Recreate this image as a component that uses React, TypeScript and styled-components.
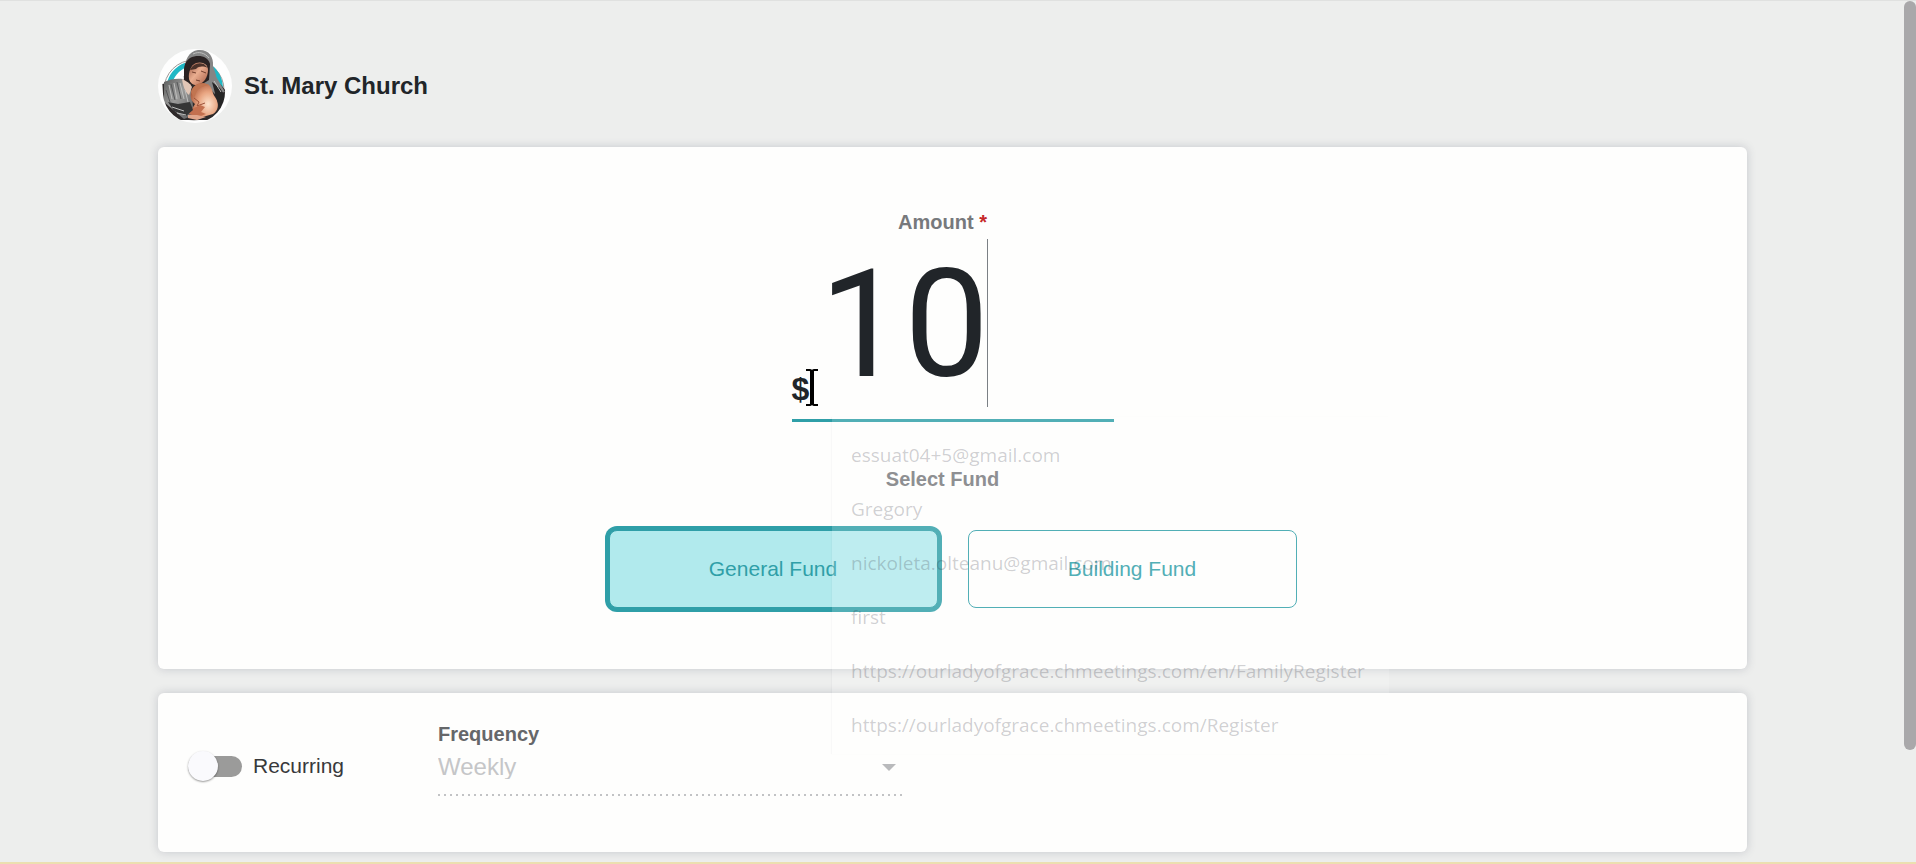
import React, { useState } from "react";
import styled, { createGlobalStyle } from "styled-components";

const teal = "#2f9fa8";
const sans = `"Liberation Sans", Arial, sans-serif`;

const GlobalStyle = createGlobalStyle`
  *, *::before, *::after { box-sizing: border-box; }
  html, body { margin: 0; background: #edeeed; }
  body { font-family: ${sans}; font-size: 21px; line-height: 24px; color: #212529; overflow: hidden; }
  button, input, select { font: inherit; color: inherit; }
`;

const Page = styled.div`
  position: relative;
  display: flex;
  flex-direction: column;
  height: 100vh;
  padding: 47px 169px 0 158px;
  border-top: 1px solid #e0e1e0;
  border-bottom: 2px solid #ecdfb0;
`;

const Header = styled.header`
  display: flex;
  align-items: center;
  gap: 12px;
  height: 76px;
  margin-bottom: 23px;
  flex: none;
`;

const Avatar = styled.svg`
  width: 74px;
  height: 76px;
`;

const ChurchName = styled.h1`
  margin: 0;
  font-size: 24px;
  line-height: 28px;
  font-weight: 700;
`;

const Card = styled.section`
  flex: none;
  background: #fefefd;
  border-radius: 6px;
  box-shadow: 0 0 10px rgba(60, 66, 90, 0.22);
`;

const GiftCard = styled(Card)`
  display: flex;
  flex-direction: column;
  align-items: center;
  padding: 63px 24px 61px;
  margin-bottom: 24px;
`;

const Caption = styled.label`
  font-size: 20px;
  font-weight: 700;
  color: #77797c;
`;

const CenterCaption = styled(Caption)`
  padding-right: 20px;
`;

const Required = styled.span`
  color: #c62828;
`;

const AmountRow = styled.div`
  position: relative;
  display: flex;
  align-items: flex-end;
  width: 322px;
  height: 188px;
  padding-bottom: 8px;
  border-bottom: 3px solid ${teal};
`;

const Currency = styled.span`
  width: 28px;
  margin-bottom: 3px;
  font-size: 32px;
  line-height: 38px;
  font-weight: 700;
`;

const AmountInput = styled.input`
  flex: 1;
  min-width: 0;
  height: 172px;
  padding: 0;
  border: 0;
  outline: 0;
  background: transparent;
  font-family: Roboto, ${sans};
  font-size: 151px;
  line-height: 172px;
`;

const Caret = styled.span`
  position: absolute;
  left: 195px;
  top: 5px;
  width: 1px;
  height: 168px;
  background: #7b8085;
`;

const IBeam = styled.svg`
  position: absolute;
  left: 13px;
  top: 135px;
  width: 14px;
  height: 37px;
`;

const FundCaption = styled(CenterCaption)`
  margin-top: 45px;
`;

const Funds = styled.div`
  display: flex;
  gap: 30px;
  margin-top: 39px;
`;

const FundButton = styled.button<{ $selected: boolean }>`
  width: 329px;
  height: 78px;
  border: 1px solid ${teal};
  border-radius: 8px;
  color: ${teal};
  background: ${(p) => (p.$selected ? "#b1eaed" : "transparent")};
  box-shadow: ${(p) => (p.$selected ? `0 0 0 4px ${teal}` : "none")};
`;

const RecurringCard = styled(Card)`
  display: flex;
  align-items: flex-start;
  height: 159px;
  padding: 29px 30px;
`;

const SwitchLabel = styled.label`
  display: flex;
  align-items: center;
  gap: 11px;
  width: 250px;
  height: 32px;
  margin-top: 28px;
  color: #38393b;
`;

const Switch = styled.input`
  appearance: none;
  display: flex;
  align-items: center;
  width: 54px;
  height: 21px;
  margin: 0;
  border-radius: 11px;
  background: #9b9b9a;

  &::before {
    content: "";
    width: 30px;
    height: 30px;
    border-radius: 50%;
    background: #fafafd;
    box-shadow: 0 1px 2px rgba(0, 0, 0, 0.4);
  }

  &:checked {
    justify-content: flex-end;
    background: ${teal};
  }
`;

const Frequency = styled.div`
  display: flex;
  flex-direction: column;
  width: 464px;
  position: relative;
`;

const FrequencyCaption = styled(Caption)`
  color: #65676a;
`;

const FrequencySelect = styled.select`
  appearance: none;
  height: 50px;
  padding: 0 0 9px;
  border: 0;
  font-size: 24px;
  opacity: 1;
  color: #c5c6c8;
  background: repeating-linear-gradient(90deg, #c2c3c5 0 2px, transparent 2px 6px) left bottom / 100% 2px no-repeat;
`;

const Arrow = styled.svg`
  position: absolute;
  right: 6px;
  top: 42px;
  width: 14px;
  height: 7px;
  pointer-events: none;
`;

const Suggestions = styled.ul`
  position: absolute;
  left: 832px;
  top: 416px;
  width: 557px;
  margin: 0;
  padding: 11px 0 2px;
  list-style: none;
  background: rgba(255, 255, 255, 0.17);
  box-shadow: -1px 0 1px rgba(60, 60, 100, 0.03);
`;

const Suggestion = styled.li`
  padding: 15px 19px;
  font-family: "Open Sans", "Noto Sans", sans-serif;
  font-size: 19px;
  line-height: 24px;
  color: rgba(50, 50, 62, 0.23);
`;

const Scrollbar = styled.div`
  position: absolute;
  right: 0;
  top: 0;
  width: 12px;
  height: 87%;
  border-radius: 6px;
  background: #a9a8aa;
`;

const suggestions = [
  "essuat04+5@gmail.com",
  "Gregory",
  "nickoleta.olteanu@gmail.com",
  "first",
  "https://ourladyofgrace.chmeetings.com/en/FamilyRegister",
  "https://ourladyofgrace.chmeetings.com/Register",
];

const funds = ["General Fund", "Building Fund"];

function MotherAndChild() {
  return (
    <Avatar viewBox="0 0 74 76" role="img" aria-label="St. Mary Church logo">
      <defs>
        <clipPath id="portrait">
          <path d="M4 30L26 28V0h32v28l9 14a31 31 0 0 1-62 4z" />
        </clipPath>
        <linearGradient id="robe" x1="0" y1="0" x2="1" y2="1">
          <stop offset="0" stopColor="#5c5d5d" />
          <stop offset="0.45" stopColor="#9b9b9a" />
          <stop offset="1" stopColor="#59595a" />
        </linearGradient>
        <linearGradient id="skin" x1="0" y1="0" x2="1" y2="1">
          <stop offset="0" stopColor="#96543f" />
          <stop offset="0.45" stopColor="#eaae90" />
          <stop offset="1" stopColor="#a85d45" />
        </linearGradient>
        <radialGradient id="childSkin" cx="0.65" cy="0.6" r="0.7">
          <stop offset="0" stopColor="#fde3cd" />
          <stop offset="0.5" stopColor="#e8a480" />
          <stop offset="1" stopColor="#a8583b" />
        </radialGradient>
        <filter id="soft" x="-5%" y="-5%" width="110%" height="110%">
          <feGaussianBlur stdDeviation="0.6" />
        </filter>
      </defs>
      <circle cx="37" cy="38" r="37" fill="#fefefe" />
      <circle cx="36" cy="42" r="30" fill="#fff" stroke="#9c9795" strokeWidth="1" />
      <path d="M11 38a26 26 0 0 1 17-21M52 19a26 26 0 0 1 10 25" fill="none" stroke="#1fb8c5" strokeWidth="5" />
      <g clipPath="url(#portrait)">
        <g filter="url(#soft)">
          <path d="M4 36l20-4 30-4 14 14v30H4z" fill="#2f2b2c" />
          <path d="M6 34c6-3 13-4 19-3l8 9 3 27-10 4L6 54z" fill="url(#robe)" />
          <path d="M27 24C26 12 31 3 40 2c10-1 16 6 15 16l4 12 8 14-10 2-14-14z" fill="#858585" />
          <path d="M26 32c-1-11 0-18 6-22 8-4 18-2 20 6l-1 16-10 6-12-2z" fill="#2a2120" />
          <path d="M38 15c6-2 12 1 12 7 0 7-4 13-10 15-4 1-8-2-9-6-1-7 2-14 7-16z" fill="url(#skin)" />
          <path d="M32 22c3-6 8-8 14-6l4 4c-5-2-9-2-12 1z" fill="#4b3029" />
          <path d="M34 24l4 1M43 23l5 2M38 32l4 1" stroke="#74402f" strokeWidth="1" />
          <path d="M24 31c4 2 8 4 10 8l-3 8c-4-3-6-9-7-16z" fill="#e2c6b6" />
          <path d="M33 44c2-8 11-11 18-7 4 4 3 8 6 12 5 7 3 14-2 17l-14 4-9-6 5-8c-4-3-5-7-4-12z" fill="url(#childSkin)" />
          <path d="M33 44c2-8 11-11 18-7-6 1-10 3-12 6l-3 7z" fill="#c17551" />
          <path d="M36 50l5 4-2 4 8-3" fill="none" stroke="#9c5238" strokeWidth="1" />
          <path d="M32 62l10-5 5 2-4 5 5 2-8 3-9-3z" fill="#c3704f" />
          <path d="M54 34l8 6 5 8-5 13-4-12z" fill="#262526" />
          <path d="M10 54l10 2 12-2 3 8-7 6-12-5z" fill="#353536" />
          <path d="M30 67l9 0 9 2-9 3-9-2z" fill="#e0a68c" />
          <path
            d="M11 37l3 14M16 35l3 16M22 35l4 16M27 42l3 12M14 59l12 4M19 65l9 2M35 6c6-3 12-1 16 4M56 33l7 11"
            fill="none"
            stroke="#bfbfbe"
            strokeWidth="1"
          />
          <path d="M13 36l4 16M19 34l4 17M8 42l4 12" fill="none" stroke="#565758" strokeWidth="1" />
        </g>
      </g>
    </Avatar>
  );
}

export default function App() {
  const [fund, setFund] = useState(funds[0]);
  const [amount, setAmount] = useState("10");

  return (
    <Page>
      <GlobalStyle />
      <Header>
        <MotherAndChild />
        <ChurchName>St. Mary Church</ChurchName>
      </Header>
      <GiftCard>
        <CenterCaption htmlFor="amount">
          Amount <Required>*</Required>
        </CenterCaption>
        <AmountRow>
          <Currency>$</Currency>
          <AmountInput id="amount" value={amount} autoComplete="off" onChange={(e) => setAmount(e.target.value)} />
          <Caret />
          <IBeam viewBox="0 0 14 37" aria-hidden="true">
            <path d="M1 1h4l2 1 2-1h4M1 36h4l2-1 2 1h4M7 2v33" fill="none" stroke="#000" strokeWidth="2" />
            <path d="M7 2v33" stroke="#000" strokeWidth="4" />
          </IBeam>
        </AmountRow>
        <FundCaption as="div" id="fund-caption">Select Fund</FundCaption>
        <Funds role="group" aria-labelledby="fund-caption">
          {funds.map((name) => (
            <FundButton
              key={name}
              type="button"
              $selected={fund === name}
              aria-pressed={fund === name}
              onClick={() => setFund(name)}
            >
              {name}
            </FundButton>
          ))}
        </Funds>
      </GiftCard>
      <RecurringCard>
        <SwitchLabel>
          <Switch type="checkbox" role="switch" />
          Recurring
        </SwitchLabel>
        <Frequency>
          <FrequencyCaption htmlFor="frequency">Frequency</FrequencyCaption>
          <FrequencySelect id="frequency" disabled defaultValue="Weekly">
            <option>Weekly</option>
          </FrequencySelect>
          <Arrow viewBox="0 0 14 7" aria-hidden="true">
            <path d="M0 0h14L7 7z" fill="#b9babc" />
          </Arrow>
        </Frequency>
      </RecurringCard>
      <Suggestions>
        {suggestions.map((text) => (
          <Suggestion key={text}>{text}</Suggestion>
        ))}
      </Suggestions>
      <Scrollbar />
    </Page>
  );
}
